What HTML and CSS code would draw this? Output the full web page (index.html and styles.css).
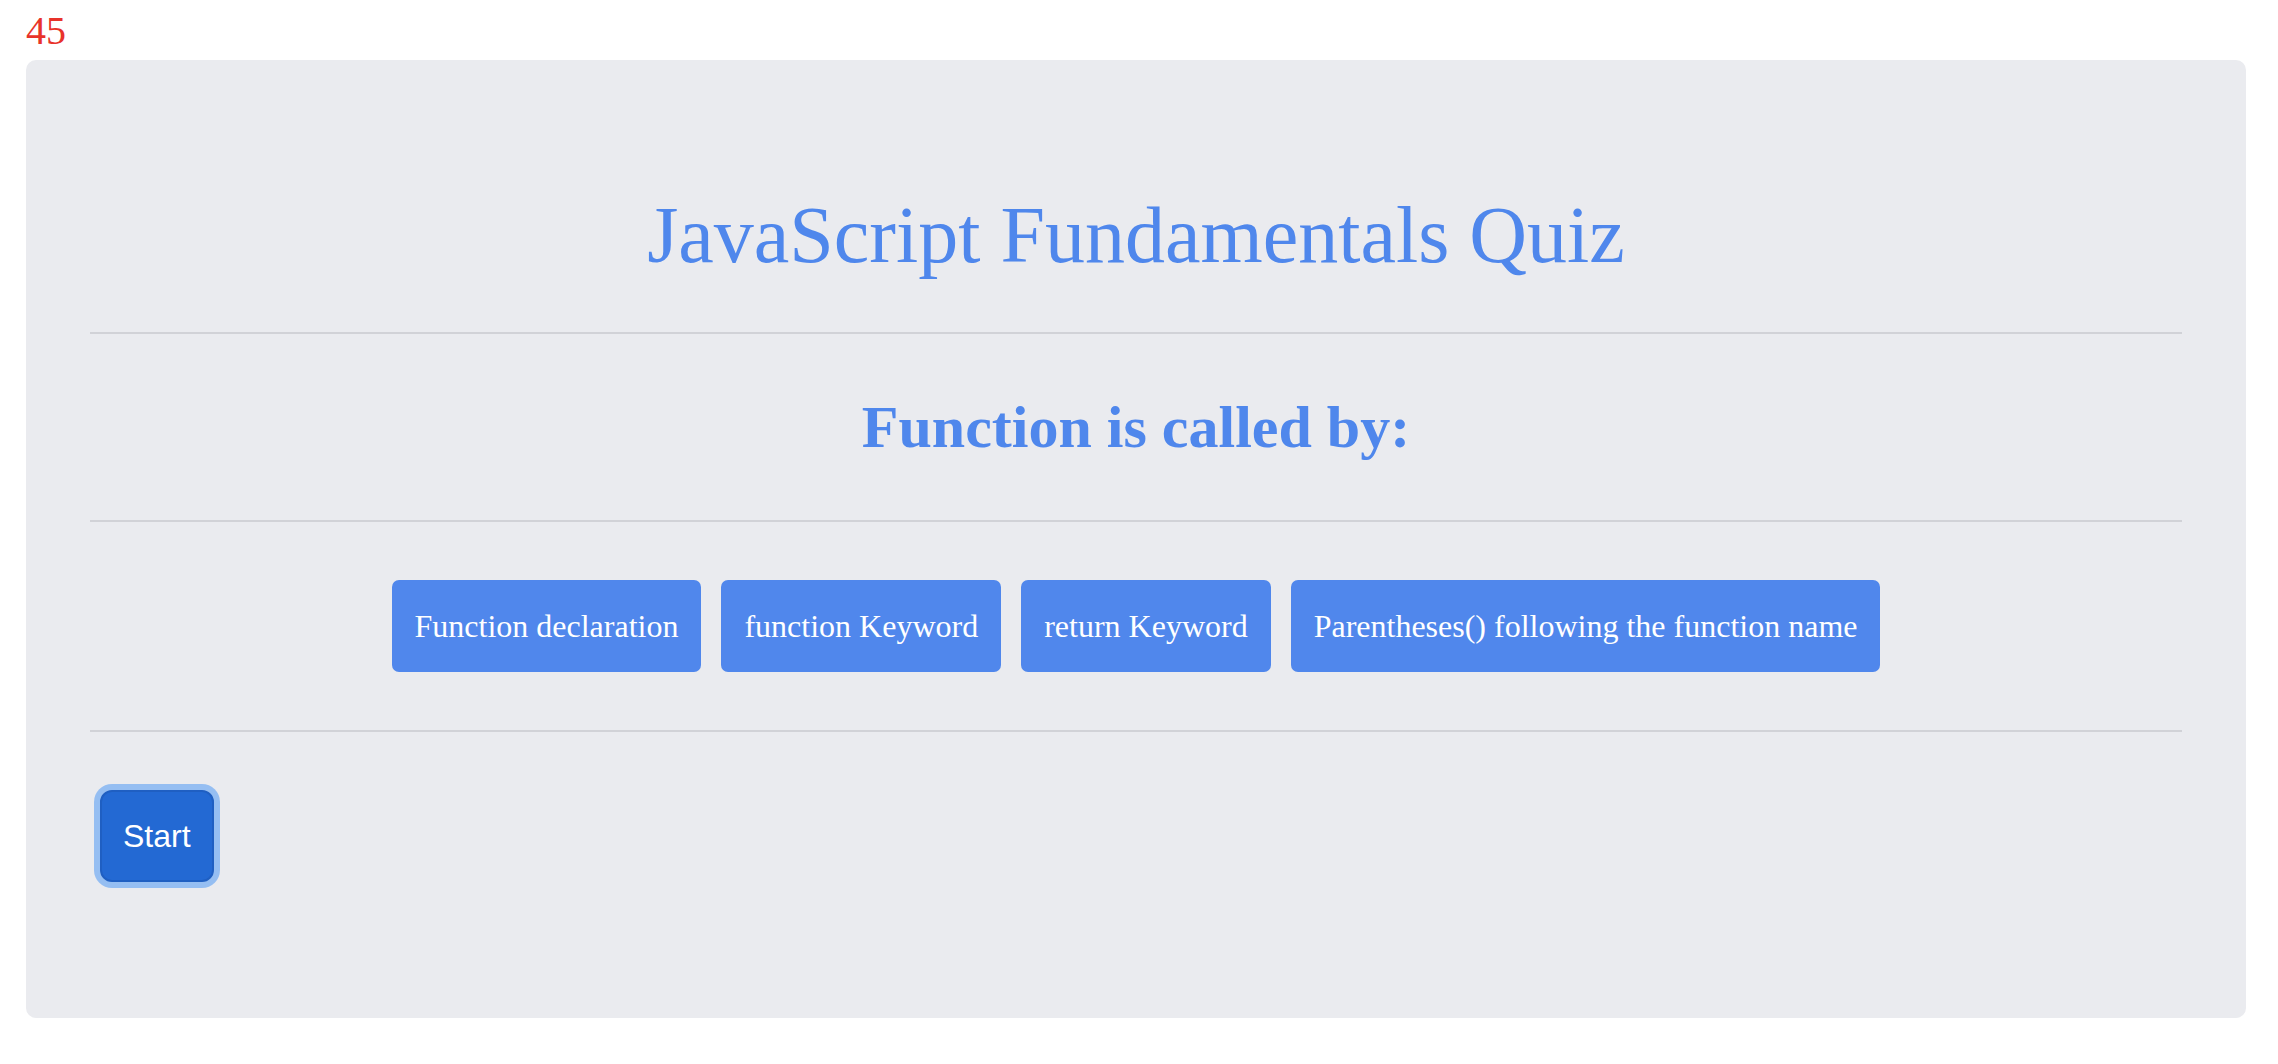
FILE: index.html
```html
<!DOCTYPE html>
<html lang="en">
<head>
<meta charset="utf-8">
<title>JavaScript Fundamentals Quiz</title>
<link rel="stylesheet" href="styles.css">
</head>
<body>
<div class="page">
  <div class="timer">45</div>
  <main class="quiz">
    <h1 class="title">JavaScript Fundamentals Quiz</h1>
    <hr class="rule rule-first">
    <h2 class="question">Function is called by:</h2>
    <hr class="rule">
    <div class="answers">
      <button class="answer">Function declaration</button>
      <button class="answer">function Keyword</button>
      <button class="answer">return Keyword</button>
      <button class="answer">Parentheses() following the function name</button>
    </div>
    <hr class="rule">
    <div class="controls">
      <button class="start">Start</button>
    </div>
  </main>
</div>
</body>
</html>
```

FILE: styles.css
```css
html, body {
  margin: 0;
  padding: 0;
  background: #ffffff;
}

.page {
  padding: 8px 32px 0 26px;
  font-family: "Liberation Serif", "Times New Roman", serif;
}

.timer {
  font-size: 40px;
  line-height: 46px;
  color: #e8332a;
  padding-left: 0;
}

.quiz {
  margin-top: 6px;
  box-sizing: border-box;
  width: 2220px;
  height: 958px;
  background: #eaebef;
  border-radius: 10px;
  padding: 129px 64px 136px 64px;
}

.title {
  margin: 0;
  font-size: 80px;
  line-height: 92px;
  font-weight: normal;
  color: #4f87ec;
  text-align: center;
}

.rule {
  margin: 58px 0;
  border: 0;
  border-top: 2px solid #d1d2d7;
  height: 0;
}

.rule-first {
  margin-top: 51px;
  margin-bottom: 59px;
}

.question {
  margin: 0;
  font-size: 60px;
  line-height: 69px;
  font-weight: bold;
  color: #4f87ec;
  text-align: center;
}

.answers {
  display: flex;
  justify-content: center;
  gap: 20px;
}

.answer {
  font-family: "Liberation Serif", "Times New Roman", serif;
  font-size: 32px;
  line-height: 38px;
  color: #ffffff;
  background: #5087ec;
  border: 0;
  border-radius: 7px;
  padding: 27px 23px;
  margin: 0;
}

.controls {
  display: flex;
}

.start {
  margin-left: 10px;
  font-family: "Liberation Sans", Arial, sans-serif;
  font-size: 32px;
  line-height: 48px;
  color: #ffffff;
  background: #2369d3;
  border: 2px solid #1f5fc2;
  border-radius: 12px;
  padding: 20px 21px;
  box-shadow: 0 0 0 6px #95bef2;
}
```
